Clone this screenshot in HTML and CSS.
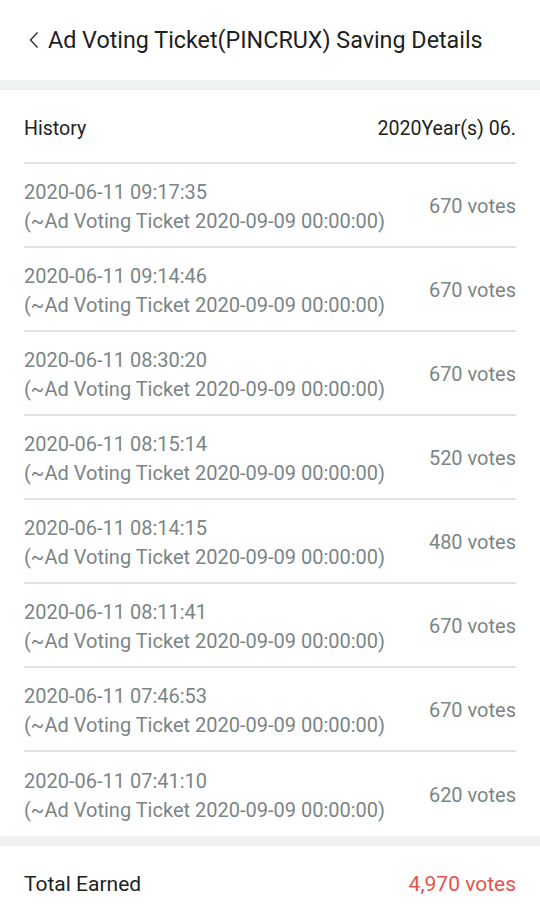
FILE: index.html
```html
<!DOCTYPE html>
<html>
<head>
<meta charset="utf-8">
<link rel="stylesheet" href="styles.css">
</head>
<body>
<div class="page">
  <header class="header">
    <svg class="back" width="10" height="18" viewBox="0 0 10 18"><path d="M8.5 1.5 L1.5 9 L8.5 16.5" fill="none" stroke="#333" stroke-width="1.4"/></svg>
    <h1 class="title">Ad Voting Ticket(PINCRUX) Saving Details</h1>
  </header>
  <div class="band"></div>
  <section class="list">
    <div class="list-head">
      <span>History</span>
      <span>2020Year(s) 06.</span>
    </div>
    <div class="row"><div class="info"><div>2020-06-11 09:17:35</div><div>(~Ad Voting Ticket 2020-09-09 00:00:00)</div></div><div class="votes">670 votes</div></div>
    <div class="row"><div class="info"><div>2020-06-11 09:14:46</div><div>(~Ad Voting Ticket 2020-09-09 00:00:00)</div></div><div class="votes">670 votes</div></div>
    <div class="row"><div class="info"><div>2020-06-11 08:30:20</div><div>(~Ad Voting Ticket 2020-09-09 00:00:00)</div></div><div class="votes">670 votes</div></div>
    <div class="row"><div class="info"><div>2020-06-11 08:15:14</div><div>(~Ad Voting Ticket 2020-09-09 00:00:00)</div></div><div class="votes">520 votes</div></div>
    <div class="row"><div class="info"><div>2020-06-11 08:14:15</div><div>(~Ad Voting Ticket 2020-09-09 00:00:00)</div></div><div class="votes">480 votes</div></div>
    <div class="row"><div class="info"><div>2020-06-11 08:11:41</div><div>(~Ad Voting Ticket 2020-09-09 00:00:00)</div></div><div class="votes">670 votes</div></div>
    <div class="row"><div class="info"><div>2020-06-11 07:46:53</div><div>(~Ad Voting Ticket 2020-09-09 00:00:00)</div></div><div class="votes">670 votes</div></div>
    <div class="row"><div class="info"><div>2020-06-11 07:41:10</div><div>(~Ad Voting Ticket 2020-09-09 00:00:00)</div></div><div class="votes">620 votes</div></div>
  </section>
  <div class="band"></div>
  <div class="total">
    <span>Total Earned</span>
    <span class="total-value">4,970 votes</span>
  </div>
</div>
</body>
</html>
```

FILE: styles.css
```css
* { box-sizing: border-box; }
html, body { margin: 0; padding: 0; background: #fff; }
body { font-family: Roboto, "Liberation Sans", sans-serif; color: #222; }
.page { width: 540px; }
.header {
  height: 80px;
  display: flex;
  align-items: center;
  padding-left: 29px;
  gap: 9px;
}
.back { display: block; }
.title {
  margin: 0;
  font-size: 23.3px;
  font-weight: 400;
  color: #1e1e1e;
}
.band { height: 10px; background: #eef2f2; }
.list { padding: 0 24px; }
.list-head {
  height: 74px;
  display: flex;
  justify-content: space-between;
  align-items: center;
  font-size: 19.6px;
  color: #222;
  border-bottom: 2px solid #dfe3e3;
  padding-top: 4px;
}
.row {
  height: 84px;
  display: flex;
  justify-content: space-between;
  align-items: center;
  border-bottom: 2px solid #dfe3e3;
  color: #7b8586;
  font-size: 20px;
  padding-top: 2px;
}
.row:last-child { border-bottom: none; }
.info { line-height: 29px; padding-top: 1px; }
.total {
  height: 74px;
  display: flex;
  justify-content: space-between;
  align-items: center;
  padding: 2px 24px 0;
  font-size: 21px;
  color: #222;
}
.total-value { color: #e5534b; }
```
